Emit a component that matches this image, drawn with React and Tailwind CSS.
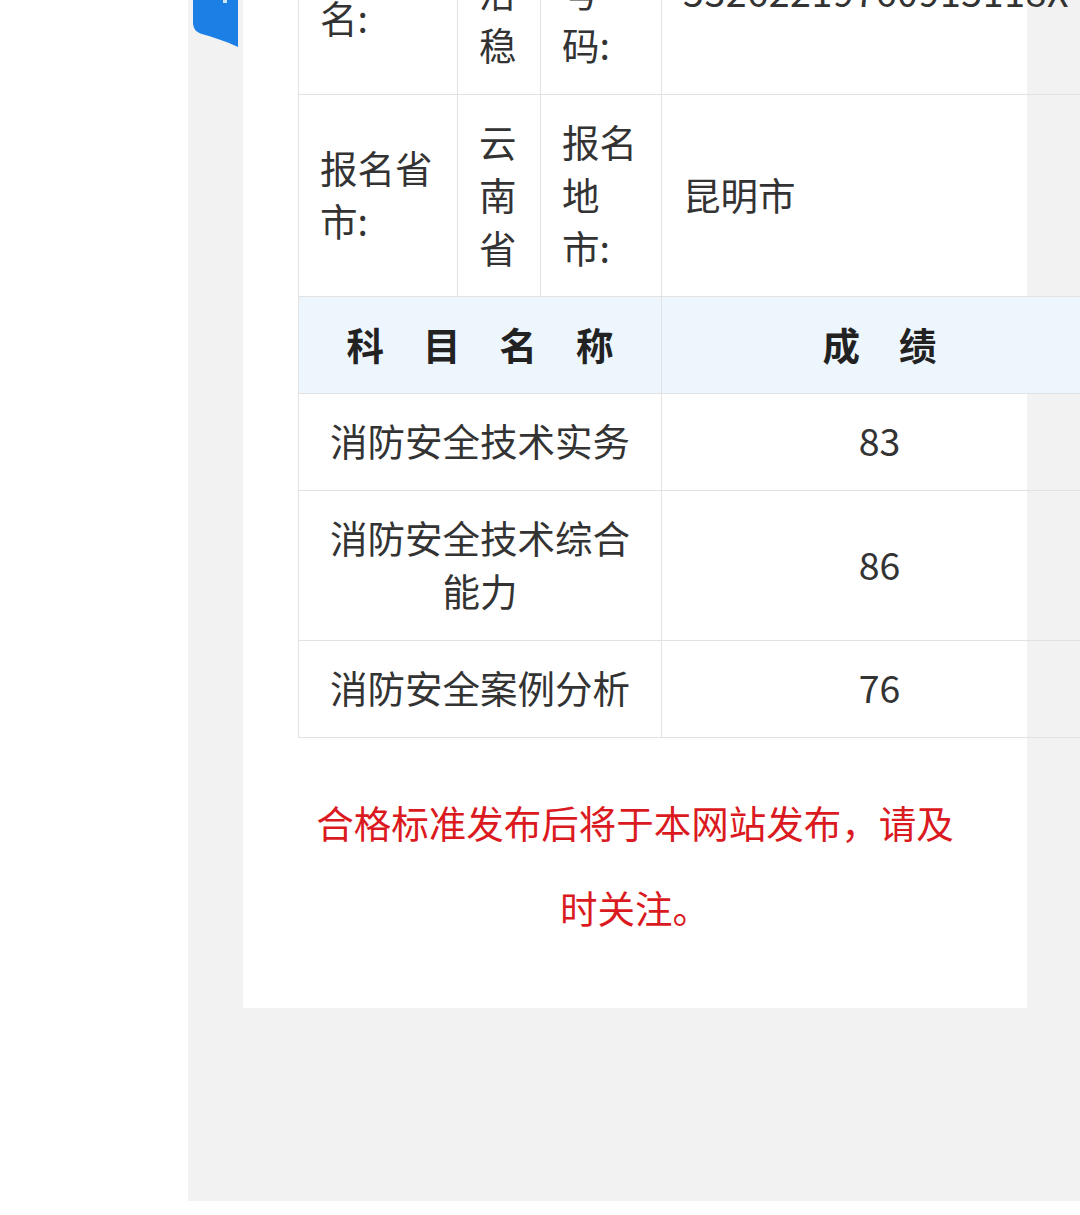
import React from "react";

const FONT = { fontFamily: '"Noto Sans CJK SC", "Noto Sans", sans-serif' };

export default function App() {
  const td = "border border-[#e2e2e2] pl-[21px] pr-[21px] pb-[5px] align-middle";
  const tc = "border border-[#e2e2e2] px-[24px] pb-[5px] align-middle text-center";
  return (
    <div className="relative w-[1080px] h-[1215px] bg-white overflow-hidden text-[#333]" style={FONT}>
      <div className="ml-[188px] h-[1201px] bg-[#f2f2f2] pl-[55px] overflow-hidden">
        <div className="w-[784px] h-[1008px] bg-white flex flex-col items-start">
          <table className="mt-[-110px] ml-[55px] w-[799px] min-w-[799px] table-fixed border-collapse text-[37.5px] leading-[53px]">
            <colgroup>
              <col className="w-[159px]" />
              <col className="w-[83px]" />
              <col className="w-[121px]" />
              <col className="w-[436px]" />
            </colgroup>
            <tbody>
              <tr className="h-[204px]">
                <td className={td}>考生姓名:</td>
                <td className={td}>张洛稳</td>
                <td className={td}>证件号码:</td>
                <td className={td + " whitespace-nowrap tracking-[0.6px]"}>53262219760915118X</td>
              </tr>
              <tr className="h-[202px]">
                <td className={td}>报名省市:</td>
                <td className={td}>云南省</td>
                <td className={td}>报名地市:</td>
                <td className={td}>昆明市</td>
              </tr>
              <tr className="h-[97px] bg-[#edf5fd]">
                <td colSpan={3} className="border border-[#e2e2e2] pb-[4px] font-bold text-[#222]">
                  <div className="flex justify-center gap-[39px]">
                    <span>科</span><span>目</span><span>名</span><span>称</span>
                  </div>
                </td>
                <td className="border border-[#e2e2e2] pb-[4px] font-bold text-[#222]">
                  <div className="flex justify-center gap-[39px]">
                    <span>成</span><span>绩</span>
                  </div>
                </td>
              </tr>
              <tr className="h-[97px]">
                <td colSpan={3} className={tc}>消防安全技术实务</td>
                <td className={tc}>83</td>
              </tr>
              <tr className="h-[150px]">
                <td colSpan={3} className={tc}>消防安全技术综合能力</td>
                <td className={tc}>86</td>
              </tr>
              <tr className="h-[97px]">
                <td colSpan={3} className={tc}>消防安全案例分析</td>
                <td className={tc}>76</td>
              </tr>
            </tbody>
          </table>
          <p className="w-full mt-[41px] px-[66px] text-center text-[37.5px] leading-[85px] text-[#da1a20]">
            合格标准发布后将于本网站发布，请及时关注。
          </p>
        </div>
      </div>
      <svg className="absolute left-[193px] top-0" width="45" height="48" viewBox="0 0 45 48">
        <path d="M0 0H45V47C32 41 20 37 9 34C3 32 0 29 0 22Z" fill="#1b7fe6" />
        <rect x="30" y="0" width="4" height="3" fill="#ffffff" opacity="0.8" />
      </svg>
    </div>
  );
}
